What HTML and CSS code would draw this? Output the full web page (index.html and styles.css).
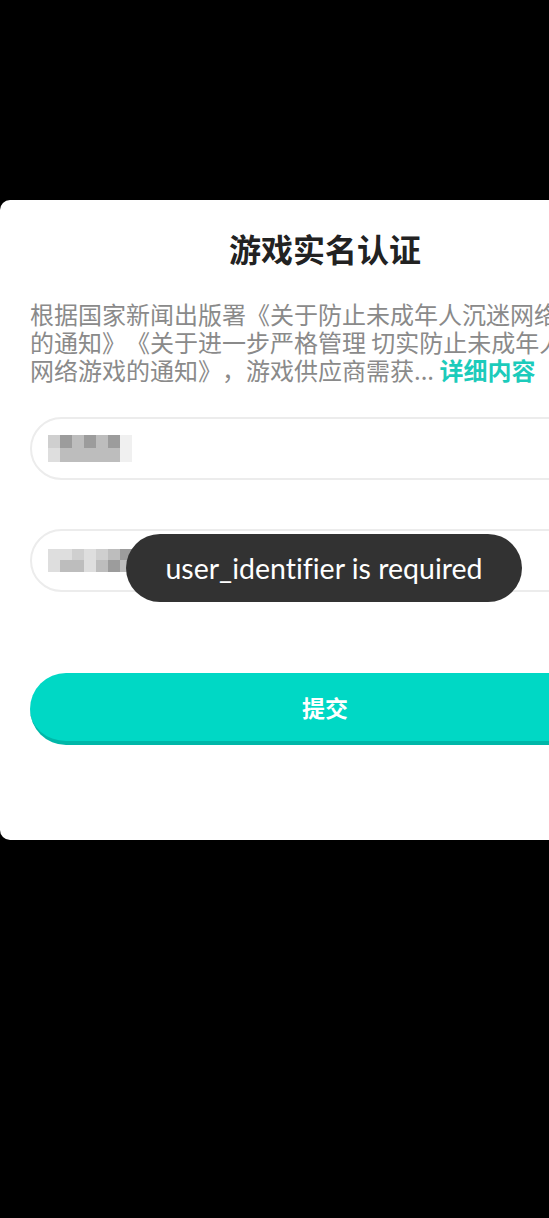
FILE: index.html
```html
<!DOCTYPE html>
<html lang="zh-CN">
<head>
    <meta charset="UTF-8">
    <meta name="viewport" content="width=device-width, initial-scale=1.0">
    <title>游戏实名认证</title>
    <link rel="stylesheet" href="styles.css">
</head>
<body>
    <div class="page">
        <div class="card">
            <h1 class="title">游戏实名认证</h1>
            <p class="notice">根据国家新闻出版署《关于防止未成年人沉迷网络游戏的通知》《关于进一步严格管理 切实防止未成年人沉迷网络游戏的通知》，游戏供应商需获... <a class="more">详细内容</a></p>

            <div class="field">
                <div class="mosaic mosaic-name">
                    <span class="c1"></span><span class="c3"></span><span class="c2"></span><span class="c3"></span><span class="c2"></span><span class="c3"></span><span class="c5"></span>
                    <span class="c4"></span><span class="c2"></span><span class="c2"></span><span class="c2"></span><span class="c2"></span><span class="c2"></span><span class="c5"></span>
                </div>
            </div>

            <div class="field field-id">
                <div class="mosaic mosaic-id">
                    <span class="c4"></span><span class="c4"></span><span class="c1"></span><span class="c4"></span><span class="c1"></span><span class="c2"></span><span class="c3"></span><span class="c3"></span><span class="c6"></span>
                    <span class="c4"></span><span class="c2"></span><span class="c2"></span><span class="c4"></span><span class="c2"></span><span class="c3"></span><span class="c2"></span><span class="c3"></span><span class="c6"></span>
                </div>
            </div>

            <div class="btn">提交</div>

            <div class="toast">user_identifier is required</div>
        </div>
    </div>
</body>
</html>
```

FILE: styles.css
```css
*{
    padding: 0px;
    margin: 0px;
    box-sizing: border-box;
}
html, body{
    height: 100%;
    overflow: hidden;
}
body{
    background: #000;
    font-family: "Noto Sans CJK SC", "Noto Sans", sans-serif;
}
.page{
    padding-top: 200px;
}
.card{
    position: relative;
    width: 650px;
    padding: 27px 30px 95px;
    background: #fff;
    border-radius: 10px;
}
.card .title{
    font-size: 32px;
    line-height: 43px;
    font-weight: 700;
    color: #222;
    text-align: center;
}
.card .notice{
    margin-top: 30px;
    font-size: 24px;
    line-height: 28px;
    color: #8a8a8a;
    text-spacing-trim: space-all;
}
.card .notice .more{
    color: #1ccbbb;
    font-weight: 700;
    cursor: pointer;
}
.card .field{
    display: flex;
    align-items: center;
    height: 63px;
    margin-top: 33px;
    padding-left: 16px;
    border: 2px solid #ececec;
    border-radius: 32px;
}
.card .field-id{
    margin-top: 49px;
}
.mosaic{
    display: grid;
    filter: blur(0.6px);
}
.mosaic span{
    display: block;
}
.mosaic-name{
    grid-template-columns: repeat(7, 12px);
    grid-template-rows: 13px 14px;
}
.mosaic-id{
    grid-template-columns: repeat(9, 12px);
    grid-template-rows: 11px 12px;
}
.mosaic .c1{ background: #cfcfcf; }
.mosaic .c2{ background: #bdbdbd; }
.mosaic .c3{ background: #9c9c9c; }
.mosaic .c4{ background: #dedede; }
.mosaic .c5{ background: #f0f0f0; }
.mosaic .c6{ background: #5a5a5a; }
.card .btn{
    margin-top: 81px;
    height: 72px;
    border-radius: 36px;
    background: #00d8c5;
    border-bottom: 4px solid #00b7a8;
    color: #fff;
    font-size: 23px;
    font-weight: 700;
    line-height: 68px;
    text-align: center;
    cursor: pointer;
}
.card .toast{
    position: absolute;
    left: 126px;
    top: 334px;
    width: 396px;
    height: 68px;
    border-radius: 34px;
    background: #323232;
    color: #fff;
    font-family: Lato, "Noto Sans", sans-serif;
    font-size: 28.5px;
    font-variant-ligatures: none;
    line-height: 68px;
    text-align: center;
}
```
